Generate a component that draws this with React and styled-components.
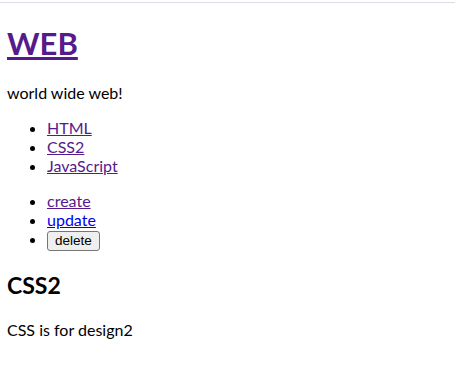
import styled, { createGlobalStyle } from "styled-components";

const GlobalStyle = createGlobalStyle`
  body {
    margin: 0;
    background: #fff;
    color: #000;
    font-family: Lato, "Noto Sans CJK KR", sans-serif;
    font-size: 16px;
    line-height: 19px;
  }
`;

const TopRule = styled.div`
  height: 1px;
  margin-top: 2px;
  background: #dddbe4;
`;

const Page = styled.div`
  padding: 0 7px;
`;

const Title = styled.h1`
  font-size: 31px;
  line-height: 38px;
  margin: 21px 0;
  font-weight: 700;
`;

const Link = styled.a`
  color: ${(props) => (props.$fresh ? "#0000ee" : "#551a8b")};
  text-decoration: underline;
  cursor: pointer;
`;

const Desc = styled.p`
  margin: 16px 0;
`;

const List = styled.ul`
  margin: 16px 0;
  padding-left: 40px;
`;

const Item = styled.li``;

const Button = styled.button`
  box-sizing: border-box;
  height: 20px;
  font-family: "Liberation Sans", Arial, sans-serif;
  font-size: 13.5px;
  line-height: 16px;
  padding: 0 7px;
  border: 1px solid #767676;
  border-radius: 3px;
  background: #efefef;
  color: #000;
  vertical-align: middle;
`;

const Heading = styled.h2`
  font-size: 23px;
  line-height: 29px;
  margin: 20px 0;
  font-weight: 700;
`;

const Body = styled.p`
  margin: 16px 0;
`;

export default function App() {
  return (
    <>
      <GlobalStyle />
      <TopRule />
      <Page>
        <Title>
          <Link href="#">WEB</Link>
        </Title>
        <Desc>world wide web!</Desc>
        <List>
          <Item><Link href="#">HTML</Link></Item>
          <Item><Link href="#">CSS2</Link></Item>
          <Item><Link href="#">JavaScript</Link></Item>
        </List>
        <List>
          <Item><Link href="#">create</Link></Item>
          <Item><Link href="#" $fresh>update</Link></Item>
          <Item><Button type="button">delete</Button></Item>
        </List>
        <Heading>CSS2</Heading>
        <Body>CSS is for design2</Body>
      </Page>
    </>
  );
}
